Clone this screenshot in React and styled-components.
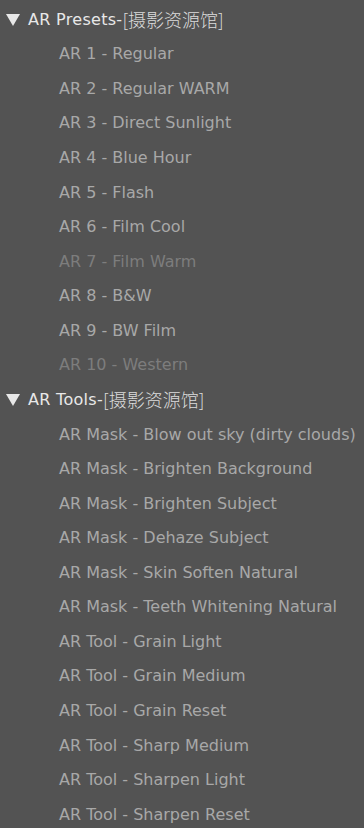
import React from "react";
import styled, { createGlobalStyle } from "styled-components";

const Global = createGlobalStyle`
  html, body { margin: 0; padding: 0; background: #535353; }
  body { font-family: "DejaVu Sans", Verdana, sans-serif; }
`;

const Panel = styled.div`
  width: 364px;
  height: 828px;
  overflow: hidden;
  background: #535353;
  padding-top: 2px;
  box-sizing: border-box;
  display: flex;
  flex-direction: column;
`;

const Row = styled.div`
  height: 34.57px;
  flex: none;
  display: flex;
  align-items: center;
  white-space: nowrap;
  font-size: 16px;
  padding-left: ${(p) => (p.$header ? "6px" : "59px")};
  color: ${(p) => (p.$header ? "#e8e8e8" : p.$dim ? "#7d7d7d" : "#a8a8a8")};
`;

const Label = styled.span`
  letter-spacing: ${(p) => (p.$header ? "0.3px" : "0")};
`;

const Tri = styled.span`
  display: inline-block;
  width: 0;
  height: 0;
  border-left: 7px solid transparent;
  border-right: 7px solid transparent;
  border-top: 12px solid #e8e8e8;
  margin-right: 8px;
  margin-top: 1px;
`;

const Cjk = styled.span`
  font-family: "Noto Sans CJK SC", sans-serif;
  font-weight: 300;
  font-size: 18px;
  color: #dcdcdc;
`;

const groups = [
  {
    title: "AR Presets-",
    items: [
      ["AR 1 - Regular"],
      ["AR 2 - Regular WARM"],
      ["AR 3 - Direct Sunlight"],
      ["AR 4 - Blue Hour"],
      ["AR 5 - Flash"],
      ["AR 6 - Film Cool"],
      ["AR 7 - Film Warm", true],
      ["AR 8 - B&W"],
      ["AR 9 - BW Film"],
      ["AR 10 - Western", true],
    ],
  },
  {
    title: "AR Tools-",
    items: [
      ["AR Mask - Blow out sky (dirty clouds)"],
      ["AR Mask - Brighten Background"],
      ["AR Mask - Brighten Subject"],
      ["AR Mask - Dehaze Subject"],
      ["AR Mask - Skin Soften Natural"],
      ["AR Mask - Teeth Whitening Natural"],
      ["AR Tool - Grain Light"],
      ["AR Tool - Grain Medium"],
      ["AR Tool - Grain Reset"],
      ["AR Tool - Sharp Medium"],
      ["AR Tool - Sharpen Light"],
      ["AR Tool - Sharpen Reset"],
    ],
  },
];

export default function App() {
  return (
    <>
      <Global />
      <Panel>
        {groups.map((g) => (
          <React.Fragment key={g.title}>
            <Row $header>
              <Tri />
              <Label $header>{g.title}</Label>
              <Cjk>[摄影资源馆]</Cjk>
            </Row>
            {g.items.map(([t, dim]) => (
              <Row key={t} $dim={dim}>
                <Label>{t}</Label>
              </Row>
            ))}
          </React.Fragment>
        ))}
      </Panel>
    </>
  );
}
